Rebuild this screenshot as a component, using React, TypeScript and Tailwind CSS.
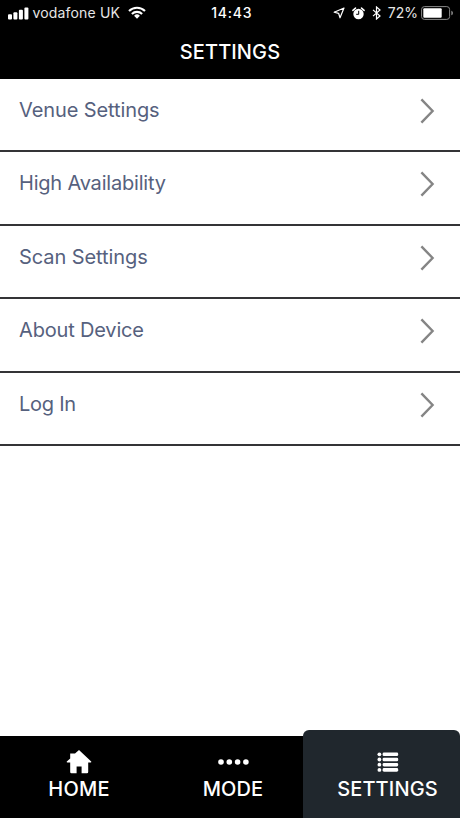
import React from 'react';

interface NavItemProps {
  label: string;
  icon: React.ReactNode;
  className: string;
  labelClass: string;
}

const menuItems = [
  { id: 'venue', label: 'Venue Settings', tracking: 'tracking-[-0.1px]' },
  { id: 'availability', label: 'High Availability', tracking: 'tracking-[-0.2px]' },
  { id: 'scan', label: 'Scan Settings', tracking: 'tracking-[-0.08px]' },
  { id: 'about', label: 'About Device', tracking: 'tracking-[-0.17px]' },
  { id: 'login', label: 'Log In', tracking: 'tracking-[-0.25px]' },
];

const SignalIcon = () => (
  <svg width="21" height="13" viewBox="0 0 21 13" fill="currentColor">
    <rect x="0" y="7.2" width="4" height="5.2" rx="1" />
    <rect x="5.4" y="5.2" width="4" height="7.2" rx="1" />
    <rect x="10.9" y="2.8" width="4" height="9.6" rx="1" />
    <rect x="16.4" y="0.4" width="4" height="12" rx="1" />
  </svg>
);

const WifiIcon = () => (
  <svg width="18" height="13" viewBox="0 0 18 13" fill="none" stroke="currentColor" strokeWidth="2.1">
    <path d="M1 5a11.3 11.3 0 0 1 16 0" />
    <path d="M3.9 8a7.2 7.2 0 0 1 10.2 0" />
    <path d="M9 12.7 6.1 9.8a4.1 4.1 0 0 1 5.8 0z" fill="currentColor" stroke="none" />
  </svg>
);

const LocationIcon = () => (
  <svg width="12" height="12" viewBox="0 0 12 12" fill="none" stroke="currentColor" strokeWidth="1.2" strokeLinejoin="round">
    <path d="M11 1 1.2 5.2 5.6 6.3 7 10.8z" />
  </svg>
);

const AlarmIcon = () => (
  <svg width="13" height="13" viewBox="0 0 13 13" fill="none">
    <circle cx="6.5" cy="7" r="5.2" fill="white" />
    <path d="M.9 3.4 3.5 1.1M12.1 3.4 9.5 1.1" stroke="white" strokeWidth="1.5" strokeLinecap="round" />
    <path d="M6.7 3.8V7.3H4.2" stroke="black" strokeWidth="1" />
  </svg>
);

const BluetoothIcon = () => (
  <svg width="9" height="14" viewBox="0 0 9 14" fill="none" stroke="currentColor" strokeWidth="1.2">
    <path d="M1 3.9 8 10 4.5 13V1L8 4 1 10.1" />
  </svg>
);

const BatteryIcon = () => (
  <svg width="33" height="14" viewBox="0 0 33 14" fill="none">
    <rect x=".6" y=".6" width="28" height="12.8" rx="2.8" stroke="#8a8a8a" strokeWidth="1" />
    <rect x="2.3" y="2.3" width="18.4" height="9.4" rx="1" fill="white" />
    <path d="M30.3 4.7c2.2.7 2.2 3.9 0 4.6z" fill="#8a8a8a" />
  </svg>
);

const HomeIcon = () => (
  <svg width="26" height="24" viewBox="0 0 26 24" fill="currentColor">
    <path d="M13 0 25.2 11.6Q25.6 12.5 24.7 12.5H22.2V22Q22.2 23.2 21 23.2H15.6V16.6H10.6V23.2H5.4Q4.2 23.2 4.2 22V12.5H1.3Q.4 12.5.8 11.6L4.2 8.4V3.4H9z" />
  </svg>
);

const DotsIcon = () => (
  <svg width="31" height="6" viewBox="0 0 31 6" fill="currentColor">
    <circle cx="3" cy="3" r="2.8" />
    <circle cx="11.3" cy="3" r="2.8" />
    <circle cx="19.6" cy="3" r="2.8" />
    <circle cx="27.9" cy="3" r="2.8" />
  </svg>
);

const ListIcon = () => (
  <svg width="22" height="20" viewBox="0 0 22 20" fill="currentColor">
    {[2.3, 7.5, 12.7, 17.9].map((y) => (
      <g key={y}>
        <circle cx="2.4" cy={y} r="1.9" />
        <rect x="5.6" y={y - 1.8} width="15.6" height="3.6" rx="1.4" />
      </g>
    ))}
  </svg>
);

const Chevron = () => (
  <svg width="15" height="26" viewBox="0 0 15 26" fill="none" stroke="#858585" strokeWidth="2.4">
    <path d="M1.4 1.3 12.6 13 1.4 24.7" />
  </svg>
);

const NavItem: React.FC<NavItemProps> = ({ label, icon, className, labelClass }) => (
  <button className={`flex shrink-0 flex-col items-center text-white ${className}`}>
    <span className="flex h-6 items-center justify-center">{icon}</span>
    <span className={`text-[20px] leading-[24px] font-medium ${labelClass}`}>{label}</span>
  </button>
);

const StatusBar = () => (
  <div className="flex h-[26px] items-center text-[14px] leading-none">
    <div className="flex flex-1 items-center pl-[7.5px]">
      <SignalIcon />
      <span className="ml-1 tracking-[0.17px] text-[#e6e6e6]">vodafone UK</span>
      <span className="ml-2 -mt-0.5"><WifiIcon /></span>
    </div>
    <span className="pl-[2px] text-[14px] font-medium tracking-[0.8px]">14:43</span>
    <div className="flex flex-1 items-center justify-end pr-[6px]">
      <span className="mr-[7px]"><LocationIcon /></span>
      <span className="mr-[7px]"><AlarmIcon /></span>
      <span className="mr-[7px]"><BluetoothIcon /></span>
      <span className="mr-[3px] text-[#e6e6e6]">72%</span>
      <BatteryIcon />
    </div>
  </div>
);

export default function App() {
  return (
    <div className="flex h-[818px] w-[460px] flex-col overflow-hidden bg-white font-['Inter',sans-serif]">
      <header className="h-[78.5px] shrink-0 bg-black text-white">
        <StatusBar />
        <h1 className="text-center text-[20px] leading-[52px] font-medium tracking-[0.1px]">SETTINGS</h1>
      </header>

      <main className="flex-1">
        {menuItems.map((item) => (
          <button
            key={item.id}
            className="flex h-[73.6px] w-full items-start justify-between border-b-2 border-[#343436] pr-[25px] pl-[19px] text-left"
          >
            <span className={`pt-[18px] text-[20px] leading-[26px] text-[#56617e] ${item.tracking}`}>{item.label}</span>
            <span className="pt-[19px]"><Chevron /></span>
          </button>
        ))}
      </main>

      <nav className="flex h-[88.5px] shrink-0 items-end">
        <div className="flex h-[82px] w-[303px] bg-black">
          <NavItem label="HOME" icon={<HomeIcon />} className="w-[158px] pt-[13.5px]" labelClass="mt-[3px] tracking-[0.2px]" />
          <NavItem label="MODE" icon={<DotsIcon />} className="w-[145px] pt-[13.5px] pl-[5px]" labelClass="mt-[3px] tracking-[0.1px]" />
        </div>
        <NavItem
          label="SETTINGS"
          icon={<ListIcon />}
          className="h-full w-[157px] rounded-t-md bg-[#20272d] pt-[20px] pl-[12px]"
          labelClass="mt-[3px] tracking-[0.15px]"
        />
      </nav>
    </div>
  );
}
